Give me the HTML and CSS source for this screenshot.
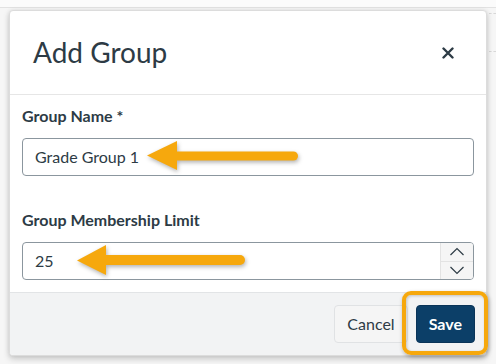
FILE: index.html
```html
<!DOCTYPE html>
<html lang="en">
<head>
<meta charset="utf-8">
<title>Add Group</title>
<link rel="stylesheet" href="styles.css">
</head>
<body>
<div class="backdrop-top"></div>
<div class="side-hint"></div>
<div class="modal">
  <header class="modal-header">
    <h1 class="modal-title">Add Group</h1>
    <button class="close-btn" aria-label="Close">
      <svg width="12" height="12" viewBox="0 0 12 12"><path d="M1.5 1.5 L10.5 10.5 M10.5 1.5 L1.5 10.5" stroke="#2d3b45" stroke-width="2.4" stroke-linecap="round"/></svg>
    </button>
  </header>
  <div class="modal-body">
    <label class="field-label">Group Name *</label>
    <div class="input">Grade Group 1</div>
    <label class="field-label second">Group Membership Limit</label>
    <div class="input number">
      <span class="value">25</span>
      <span class="spinner">
        <span class="spin-half">
          <svg width="16" height="9" viewBox="0 0 16 9"><path d="M1.5 8 L8 1.5 L14.5 8" fill="none" stroke="#2d3b45" stroke-width="1.2"/></svg>
        </span>
        <span class="spin-half">
          <svg width="16" height="9" viewBox="0 0 16 9"><path d="M1.5 1 L8 7.5 L14.5 1" fill="none" stroke="#2d3b45" stroke-width="1.2"/></svg>
        </span>
      </span>
    </div>
  </div>
  <footer class="modal-footer">
    <button class="btn btn-cancel">Cancel</button>
    <button class="btn btn-save">Save</button>
  </footer>
</div>
<div class="highlight"></div>
<svg class="arrows" width="496" height="364" viewBox="0 0 496 364">
  <g class="arrow" fill="#f6a80d" stroke="#f6a80d">
    <line x1="174" y1="156" x2="293.5" y2="156" stroke-width="9" stroke-linecap="round"/>
    <polygon points="147,155.5 177,141 177,170" stroke="none"/>
    <line x1="104" y1="260" x2="240" y2="260" stroke-width="10" stroke-linecap="round"/>
    <polygon points="77,260.5 106,245 106,275" stroke="none"/>
  </g>
</svg>
</body>
</html>
```

FILE: styles.css
```css
* { box-sizing: border-box; }

html, body {
  margin: 0;
  padding: 0;
}

body {
  width: 496px;
  height: 364px;
  background: #f6f6f6;
  font-family: Lato, "Noto Sans", sans-serif;
  color: #2d3b45;
  position: relative;
  overflow: hidden;
}

.backdrop-top {
  height: 8px;
  background: #fbfbfb;
  border-bottom: 1px solid #e2e2e2;
}

.side-hint {
  position: absolute;
  left: 489px;
  top: 13px;
  width: 7px;
  height: 39px;
  border-top: 1px dashed #d8d8d8;
  border-bottom: 1px dashed #d8d8d8;
}

.modal {
  position: relative;
  z-index: 1;
  margin: 2px 0 0 9px;
  width: 478px;
  height: 346px;
  background: #fff;
  border: 1px solid #dcdcdc;
  border-radius: 4px;
  box-shadow: 0 3px 6px rgba(0,0,0,0.18), 0 0 4px rgba(0,0,0,0.08);
  display: flex;
  flex-direction: column;
  overflow: hidden;
}

.modal-header {
  height: 84px;
  flex: none;
  border-bottom: 1px solid #e6e6e6;
  display: flex;
  align-items: center;
  justify-content: space-between;
  padding: 0 31px 0 23px;
}

.modal-title {
  margin: 0;
  font-size: 28px;
  font-weight: 400;
  line-height: 34px;
  color: #2d3b45;
  padding-bottom: 2px;
}

.close-btn {
  border: 0;
  background: none;
  padding: 0;
  width: 14px;
  height: 14px;
  display: flex;
  align-items: center;
  justify-content: center;
}

.modal-body {
  flex: 1;
  padding: 10px 12px 0 12px;
  display: flex;
  flex-direction: column;
}

.field-label {
  font-size: 16px;
  font-weight: 700;
  line-height: 22px;
  color: #2d3b45;
}

.field-label.second {
  margin-top: 33px;
}

.input {
  margin-top: 11px;
  height: 38px;
  border: 1px solid #8b969e;
  border-radius: 4px;
  font-size: 16px;
  line-height: 36px;
  padding-left: 12px;
  color: #2d3b45;
  display: flex;
  align-items: center;
}

.input.number {
  justify-content: space-between;
  padding-right: 0;
}

.spinner {
  width: 33px;
  height: 36px;
  background: #f5f5f5;
  border-left: 1px solid #e3e3e3;
  border-radius: 0 3px 3px 0;
  display: flex;
  flex-direction: column;
}

.spin-half {
  flex: 1;
  display: flex;
  align-items: center;
  justify-content: center;
}

.spin-half:first-child {
  border-bottom: 1px solid #e3e3e3;
}

.modal-footer {
  height: 63px;
  flex: none;
  background: #f2f3f4;
  border-top: 1px solid #e2e4e6;
  display: flex;
  justify-content: flex-end;
  align-items: flex-start;
  padding: 12px 11px 0 0;
  gap: 8px;
}

.btn {
  font-family: Lato, "Noto Sans", sans-serif;
  font-size: 16px;
  height: 38px;
  border-radius: 4px;
  padding: 0 12px;
  line-height: 36px;
}

.btn-cancel {
  background: #f5f5f5;
  border: 1px solid #e0e2e4;
  color: #2d3b45;
}

.btn-save {
  background: #0c3f68;
  border: 1px solid #0a3458;
  color: #fff;
  font-weight: 700;
}

.highlight {
  position: absolute;
  z-index: 2;
  left: 402px;
  top: 291px;
  width: 86px;
  height: 64px;
  border: 4px solid #f6a80d;
  border-radius: 9px;
  box-shadow: 1px 2px 4px rgba(0,0,0,0.3), inset 1px 1px 3px rgba(0,0,0,0.2);
}

.arrows {
  position: absolute;
  z-index: 3;
  left: 0;
  top: 0;
  pointer-events: none;
}

.arrow {
  filter: drop-shadow(1px 2px 2px rgba(0,0,0,0.3));
}
```
